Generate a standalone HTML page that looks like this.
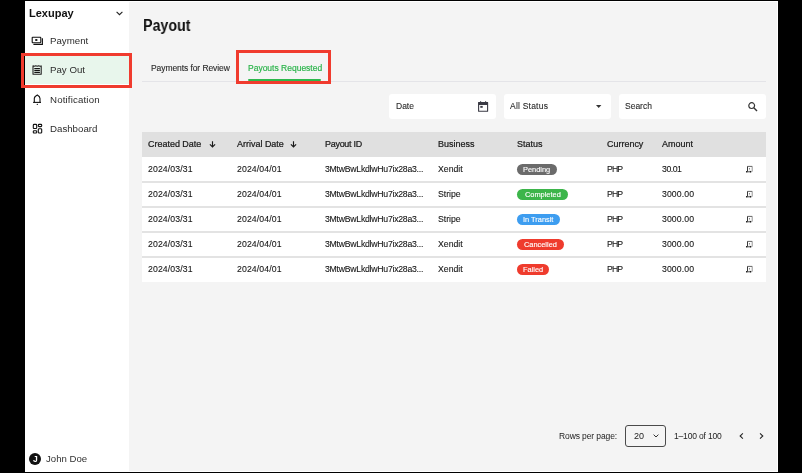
<!DOCTYPE html>
<html><head><meta charset="utf-8">
<style>
*{margin:0;padding:0;box-sizing:border-box}
html,body{width:802px;height:473px;background:#000;overflow:hidden;font-family:"Liberation Sans",sans-serif;color:#222}
.a{position:absolute;white-space:nowrap;line-height:1;will-change:transform}
.r{position:absolute}
svg{position:absolute;overflow:visible}
.red{position:absolute;border:3px solid #f03b2e}
.chip{position:absolute;height:11.5px;border-radius:6px;color:#fff;font-size:7.4px;line-height:11.5px;text-align:center;white-space:nowrap}
.chip span{will-change:transform;display:inline-block;-webkit-text-stroke:0.12px #fff}
.box{position:absolute;background:#fff;border-radius:3px;height:25px;top:94px}
</style></head><body>
<div class="r" style="left:25px;top:1px;width:753px;height:471px;background:#fff"></div>
<div class="r" style="left:129px;top:2px;width:648px;height:469px;background:#f4f4f4"></div>
<div class="a" style="left:29.00px;top:7.79px;font-size:11px;color:#111;font-weight:bold;">Lexupay</div>
<svg style="left:116px;top:11px" width="7" height="5" viewBox="0 0 7 5"><path d="M0.6 0.8 L3.5 3.7 L6.4 0.8" fill="none" stroke="#222" stroke-width="1.1"/></svg>
<div class="r" style="left:25px;top:56px;width:104px;height:28px;background:#e8f6ec"></div>
<svg style="left:31px;top:36px" width="12" height="9" viewBox="0 0 12 9"><rect x="1.2" y="1.3" width="8.6" height="5.4" rx="0.6" fill="none" stroke="#111" stroke-width="1.1"/><ellipse cx="5.3" cy="4" rx="1.3" ry="1.1" fill="#111"/><path d="M2.4 8.4 H11.4 V2.3" fill="none" stroke="#111" stroke-width="1.1"/></svg>
<div class="a" style="left:49.70px;top:35.99px;font-size:9.7px;color:#2c2c2c;font-weight:normal;">Payment</div>
<svg style="left:32px;top:65px" width="10" height="10" viewBox="0 0 10 10"><path d="M1 0.9 L2.4 1.3 L3.8 0.8 L5.2 1.3 L6.6 0.8 L8 1.3 L9.2 0.9 V9.3 H1 Z" fill="none" stroke="#222" stroke-width="1.1" stroke-linejoin="round"/><path d="M2.3 3.5 H7.9 M2.3 5.4 H7.9 M2.3 7.4 H7.9" stroke="#111" stroke-width="1.1"/></svg>
<div class="a" style="left:50.00px;top:65.29px;font-size:9.7px;color:#2c2c2c;font-weight:normal;">Pay Out</div>
<svg style="left:33px;top:94px" width="9" height="11" viewBox="0 0 9 11"><path d="M1.3 8.4 V4.6 Q1.3 2.4 4.3 0.9 Q7 2.4 7 4.6 V8.4" fill="none" stroke="#111" stroke-width="1.1" stroke-linejoin="round"/><path d="M0.1 8.4 H8" stroke="#111" stroke-width="1.1"/><circle cx="4.3" cy="10.4" r="0.6" fill="#111"/></svg>
<div class="a" style="left:49.90px;top:94.79px;font-size:9.7px;color:#2c2c2c;font-weight:normal;letter-spacing:0.15px;">Notification</div>
<svg style="left:32px;top:123px" width="11" height="11" viewBox="0 0 11 11"><g fill="none" stroke="#111" stroke-width="1.1"><rect x="1.3" y="1.4" width="3.4" height="4.1" rx="0.8"/><rect x="6.3" y="1.4" width="3.4" height="2.2" rx="0.8"/><rect x="1.3" y="7.8" width="3.4" height="2.2" rx="0.8"/><rect x="6.3" y="5.8" width="3.4" height="4.2" rx="0.8"/></g></svg>
<div class="a" style="left:49.90px;top:123.79px;font-size:9.7px;color:#2c2c2c;font-weight:normal;">Dashboard</div>
<div class="r" style="left:28.8px;top:452.8px;width:12.7px;height:12.7px;border-radius:50%;background:#111;color:#fff;font-size:8.5px;font-weight:bold;line-height:13px;text-align:center"><span style="display:inline-block;will-change:transform">J</span></div>
<div class="a" style="left:46.00px;top:454.27px;font-size:9.6px;color:#333;font-weight:normal;">John Doe</div>
<div class="red" style="left:21px;top:53px;width:111px;height:34.5px"></div>
<div class="a" style="left:142.80px;top:18.30px;font-size:16px;color:#111;font-weight:bold;transform:scaleX(0.89);transform-origin:0 0;">Payout</div>
<div class="a" style="left:150.50px;top:64.20px;font-size:8.5px;color:#2a2a2a;font-weight:normal;letter-spacing:-0.08px;-webkit-text-stroke:0.12px #2a2a2a;">Payments for Review</div>
<div class="a" style="left:247.60px;top:64.20px;font-size:8.5px;color:#2ab34a;font-weight:normal;-webkit-text-stroke:0.18px #2ab34a;">Payouts Requested</div>
<div class="r" style="left:142px;top:80.5px;width:624px;height:1px;background:#e4e4e8"></div>
<div class="r" style="left:248px;top:79px;width:72.5px;height:2px;border-radius:1px;background:#2db84d"></div>
<div class="red" style="left:236px;top:50px;width:95px;height:34px"></div>
<div class="box" style="left:389px;width:107px"></div>
<div class="a" style="left:395.80px;top:101.90px;font-size:8.5px;color:#2a2a2a;font-weight:normal;-webkit-text-stroke:0.1px #2a2a2a;">Date</div>
<svg style="left:478px;top:100px" width="11" height="12" viewBox="0 0 11 12"><path d="M0.6 2.6 H9.6 V11.2 H0.6 Z" fill="none" stroke="#3a3a44" stroke-width="1.1" stroke-linejoin="round"/><rect x="0.6" y="2" width="9" height="3" fill="#3a3a44"/><path d="M2.6 1.2 V2.5 M7.6 1.2 V2.5" stroke="#3a3a44" stroke-width="1.1"/><rect x="2.3" y="5.9" width="2.4" height="1.9" fill="#3a3a44"/></svg>
<div class="box" style="left:504px;width:107px"></div>
<div class="a" style="left:510.20px;top:102.30px;font-size:8.5px;color:#2a2a2a;font-weight:normal;letter-spacing:0.22px;-webkit-text-stroke:0.1px #2a2a2a;">All Status</div>
<svg style="left:595.8px;top:105.2px" width="5.4" height="3" viewBox="0 0 5.4 3"><path d="M0 0 H5.4 L2.7 3 Z" fill="#333"/></svg>
<div class="box" style="left:619px;width:147px"></div>
<div class="a" style="left:625.40px;top:102.00px;font-size:8.5px;color:#2a2a2a;font-weight:normal;-webkit-text-stroke:0.1px #2a2a2a;">Search</div>
<svg style="left:748px;top:102px" width="10" height="9" viewBox="0 0 10 9"><circle cx="3.7" cy="3.6" r="2.9" fill="none" stroke="#333" stroke-width="1.2"/><path d="M5.8 5.7 L9 8.9" stroke="#333" stroke-width="1.4"/></svg>
<div class="r" style="left:142px;top:132px;width:624px;height:25px;background:#e0e0e0"></div>
<div class="r" style="left:142px;top:157px;width:624px;height:125px;background:#fff"></div>
<div class="a" style="left:148.30px;top:140.40px;font-size:8.4px;color:#1a1a1a;font-weight:normal;-webkit-text-stroke:0.22px #1a1a1a;transform:scaleX(1.07);transform-origin:0 0;">Created Date</div>
<div class="a" style="left:236.80px;top:140.40px;font-size:8.4px;color:#1a1a1a;font-weight:normal;-webkit-text-stroke:0.22px #1a1a1a;transform:scaleX(1.07);transform-origin:0 0;">Arrival Date</div>
<div class="a" style="left:325.30px;top:140.40px;font-size:8.4px;color:#1a1a1a;font-weight:normal;letter-spacing:-0.25px;-webkit-text-stroke:0.22px #1a1a1a;transform:scaleX(1.07);transform-origin:0 0;">Payout ID</div>
<div class="a" style="left:438.30px;top:140.40px;font-size:8.4px;color:#1a1a1a;font-weight:normal;-webkit-text-stroke:0.22px #1a1a1a;transform:scaleX(1.07);transform-origin:0 0;">Business</div>
<div class="a" style="left:517.30px;top:140.40px;font-size:8.4px;color:#1a1a1a;font-weight:normal;-webkit-text-stroke:0.22px #1a1a1a;transform:scaleX(1.07);transform-origin:0 0;">Status</div>
<div class="a" style="left:606.80px;top:140.40px;font-size:8.4px;color:#1a1a1a;font-weight:normal;-webkit-text-stroke:0.22px #1a1a1a;transform:scaleX(1.07);transform-origin:0 0;">Currency</div>
<div class="a" style="left:661.80px;top:140.40px;font-size:8.4px;color:#1a1a1a;font-weight:normal;-webkit-text-stroke:0.22px #1a1a1a;transform:scaleX(1.07);transform-origin:0 0;">Amount</div>
<svg style="left:208.7px;top:141px" width="7" height="7" viewBox="0 0 7 7"><path d="M3.5 0.3 V6.1 M0.9 3.4 L3.5 6 L6.1 3.4" fill="none" stroke="#1a1a1a" stroke-width="1.15"/></svg>
<svg style="left:289.9px;top:141px" width="7" height="7" viewBox="0 0 7 7"><path d="M3.5 0.3 V6.1 M0.9 3.4 L3.5 6 L6.1 3.4" fill="none" stroke="#1a1a1a" stroke-width="1.15"/></svg>
<div class="a" style="left:148.30px;top:165.00px;font-size:8.7px;color:#151515;font-weight:normal;letter-spacing:0.12px;-webkit-text-stroke:0.1px #151515;">2024/03/31</div>
<div class="a" style="left:236.80px;top:165.00px;font-size:8.7px;color:#151515;font-weight:normal;letter-spacing:0.12px;-webkit-text-stroke:0.1px #151515;">2024/04/01</div>
<div class="a" style="left:325.30px;top:165.00px;font-size:8.7px;color:#151515;font-weight:normal;letter-spacing:-0.25px;-webkit-text-stroke:0.1px #151515;">3MtwBwLkdlwHu7ix28a3...</div>
<div class="a" style="left:438.30px;top:165.00px;font-size:8.7px;color:#151515;font-weight:normal;-webkit-text-stroke:0.1px #151515;">Xendit</div>
<div class="chip" style="left:517px;top:163.7px;width:40px;background:#6b6b6b"><span>Pending</span></div>
<div class="a" style="left:606.80px;top:165.00px;font-size:8.7px;color:#151515;font-weight:normal;letter-spacing:-0.9px;-webkit-text-stroke:0.1px #151515;">PHP</div>
<div class="a" style="left:661.80px;top:165.00px;font-size:8.7px;color:#151515;font-weight:normal;letter-spacing:-0.45px;-webkit-text-stroke:0.1px #151515;">30.01</div>
<svg style="left:745px;top:165px" width="9" height="9" viewBox="0 0 9 9"><path d="M7.2 1.4 V6.6" stroke="#888" stroke-width="0.9"/><path d="M2.5 1.4 H7.2" stroke="#555" stroke-width="0.9"/><path d="M2.5 1.4 V6.2" stroke="#222" stroke-width="0.9"/><path d="M1.4 6.8 H6.3" stroke="#444" stroke-width="1"/><circle cx="1.7" cy="6.7" r="0.75" fill="#111"/><circle cx="5.6" cy="6.8" r="0.7" fill="#111"/><circle cx="4.5" cy="3.8" r="0.6" fill="#444"/><path d="M3.6 5.3 H6.3" stroke="#ddd" stroke-width="0.6"/></svg>
<div class="r" style="left:142px;top:181.2px;width:624px;height:2px;background:#e3e3e3"></div>
<div class="a" style="left:148.30px;top:190.00px;font-size:8.7px;color:#151515;font-weight:normal;letter-spacing:0.12px;-webkit-text-stroke:0.1px #151515;">2024/03/31</div>
<div class="a" style="left:236.80px;top:190.00px;font-size:8.7px;color:#151515;font-weight:normal;letter-spacing:0.12px;-webkit-text-stroke:0.1px #151515;">2024/04/01</div>
<div class="a" style="left:325.30px;top:190.00px;font-size:8.7px;color:#151515;font-weight:normal;letter-spacing:-0.25px;-webkit-text-stroke:0.1px #151515;">3MtwBwLkdlwHu7ix28a3...</div>
<div class="a" style="left:438.30px;top:190.00px;font-size:8.7px;color:#151515;font-weight:normal;-webkit-text-stroke:0.1px #151515;">Stripe</div>
<div class="chip" style="left:517px;top:188.7px;width:51px;background:#3cb54a"><span>Completed</span></div>
<div class="a" style="left:606.80px;top:190.00px;font-size:8.7px;color:#151515;font-weight:normal;letter-spacing:-0.9px;-webkit-text-stroke:0.1px #151515;">PHP</div>
<div class="a" style="left:661.80px;top:190.00px;font-size:8.7px;color:#151515;font-weight:normal;letter-spacing:0.1px;-webkit-text-stroke:0.1px #151515;">3000.00</div>
<svg style="left:745px;top:190px" width="9" height="9" viewBox="0 0 9 9"><path d="M7.2 1.4 V6.6" stroke="#888" stroke-width="0.9"/><path d="M2.5 1.4 H7.2" stroke="#555" stroke-width="0.9"/><path d="M2.5 1.4 V6.2" stroke="#222" stroke-width="0.9"/><path d="M1.4 6.8 H6.3" stroke="#444" stroke-width="1"/><circle cx="1.7" cy="6.7" r="0.75" fill="#111"/><circle cx="5.6" cy="6.8" r="0.7" fill="#111"/><circle cx="4.5" cy="3.8" r="0.6" fill="#444"/><path d="M3.6 5.3 H6.3" stroke="#ddd" stroke-width="0.6"/></svg>
<div class="r" style="left:142px;top:206.2px;width:624px;height:2px;background:#e3e3e3"></div>
<div class="a" style="left:148.30px;top:215.00px;font-size:8.7px;color:#151515;font-weight:normal;letter-spacing:0.12px;-webkit-text-stroke:0.1px #151515;">2024/03/31</div>
<div class="a" style="left:236.80px;top:215.00px;font-size:8.7px;color:#151515;font-weight:normal;letter-spacing:0.12px;-webkit-text-stroke:0.1px #151515;">2024/04/01</div>
<div class="a" style="left:325.30px;top:215.00px;font-size:8.7px;color:#151515;font-weight:normal;letter-spacing:-0.25px;-webkit-text-stroke:0.1px #151515;">3MtwBwLkdlwHu7ix28a3...</div>
<div class="a" style="left:438.30px;top:215.00px;font-size:8.7px;color:#151515;font-weight:normal;-webkit-text-stroke:0.1px #151515;">Stripe</div>
<div class="chip" style="left:517px;top:213.7px;width:43.4px;background:#3d9df0"><span>In Transit</span></div>
<div class="a" style="left:606.80px;top:215.00px;font-size:8.7px;color:#151515;font-weight:normal;letter-spacing:-0.9px;-webkit-text-stroke:0.1px #151515;">PHP</div>
<div class="a" style="left:661.80px;top:215.00px;font-size:8.7px;color:#151515;font-weight:normal;letter-spacing:0.1px;-webkit-text-stroke:0.1px #151515;">3000.00</div>
<svg style="left:745px;top:215px" width="9" height="9" viewBox="0 0 9 9"><path d="M7.2 1.4 V6.6" stroke="#888" stroke-width="0.9"/><path d="M2.5 1.4 H7.2" stroke="#555" stroke-width="0.9"/><path d="M2.5 1.4 V6.2" stroke="#222" stroke-width="0.9"/><path d="M1.4 6.8 H6.3" stroke="#444" stroke-width="1"/><circle cx="1.7" cy="6.7" r="0.75" fill="#111"/><circle cx="5.6" cy="6.8" r="0.7" fill="#111"/><circle cx="4.5" cy="3.8" r="0.6" fill="#444"/><path d="M3.6 5.3 H6.3" stroke="#ddd" stroke-width="0.6"/></svg>
<div class="r" style="left:142px;top:231.2px;width:624px;height:2px;background:#e3e3e3"></div>
<div class="a" style="left:148.30px;top:240.00px;font-size:8.7px;color:#151515;font-weight:normal;letter-spacing:0.12px;-webkit-text-stroke:0.1px #151515;">2024/03/31</div>
<div class="a" style="left:236.80px;top:240.00px;font-size:8.7px;color:#151515;font-weight:normal;letter-spacing:0.12px;-webkit-text-stroke:0.1px #151515;">2024/04/01</div>
<div class="a" style="left:325.30px;top:240.00px;font-size:8.7px;color:#151515;font-weight:normal;letter-spacing:-0.25px;-webkit-text-stroke:0.1px #151515;">3MtwBwLkdlwHu7ix28a3...</div>
<div class="a" style="left:438.30px;top:240.00px;font-size:8.7px;color:#151515;font-weight:normal;-webkit-text-stroke:0.1px #151515;">Xendit</div>
<div class="chip" style="left:517px;top:238.7px;width:46.6px;background:#ef3b2d"><span>Cancelled</span></div>
<div class="a" style="left:606.80px;top:240.00px;font-size:8.7px;color:#151515;font-weight:normal;letter-spacing:-0.9px;-webkit-text-stroke:0.1px #151515;">PHP</div>
<div class="a" style="left:661.80px;top:240.00px;font-size:8.7px;color:#151515;font-weight:normal;letter-spacing:0.1px;-webkit-text-stroke:0.1px #151515;">3000.00</div>
<svg style="left:745px;top:240px" width="9" height="9" viewBox="0 0 9 9"><path d="M7.2 1.4 V6.6" stroke="#888" stroke-width="0.9"/><path d="M2.5 1.4 H7.2" stroke="#555" stroke-width="0.9"/><path d="M2.5 1.4 V6.2" stroke="#222" stroke-width="0.9"/><path d="M1.4 6.8 H6.3" stroke="#444" stroke-width="1"/><circle cx="1.7" cy="6.7" r="0.75" fill="#111"/><circle cx="5.6" cy="6.8" r="0.7" fill="#111"/><circle cx="4.5" cy="3.8" r="0.6" fill="#444"/><path d="M3.6 5.3 H6.3" stroke="#ddd" stroke-width="0.6"/></svg>
<div class="r" style="left:142px;top:256.2px;width:624px;height:2px;background:#e3e3e3"></div>
<div class="a" style="left:148.30px;top:265.00px;font-size:8.7px;color:#151515;font-weight:normal;letter-spacing:0.12px;-webkit-text-stroke:0.1px #151515;">2024/03/31</div>
<div class="a" style="left:236.80px;top:265.00px;font-size:8.7px;color:#151515;font-weight:normal;letter-spacing:0.12px;-webkit-text-stroke:0.1px #151515;">2024/04/01</div>
<div class="a" style="left:325.30px;top:265.00px;font-size:8.7px;color:#151515;font-weight:normal;letter-spacing:-0.25px;-webkit-text-stroke:0.1px #151515;">3MtwBwLkdlwHu7ix28a3...</div>
<div class="a" style="left:438.30px;top:265.00px;font-size:8.7px;color:#151515;font-weight:normal;-webkit-text-stroke:0.1px #151515;">Xendit</div>
<div class="chip" style="left:517px;top:263.7px;width:32.3px;background:#ef3b2d"><span>Failed</span></div>
<div class="a" style="left:606.80px;top:265.00px;font-size:8.7px;color:#151515;font-weight:normal;letter-spacing:-0.9px;-webkit-text-stroke:0.1px #151515;">PHP</div>
<div class="a" style="left:661.80px;top:265.00px;font-size:8.7px;color:#151515;font-weight:normal;letter-spacing:0.1px;-webkit-text-stroke:0.1px #151515;">3000.00</div>
<svg style="left:745px;top:265px" width="9" height="9" viewBox="0 0 9 9"><path d="M7.2 1.4 V6.6" stroke="#888" stroke-width="0.9"/><path d="M2.5 1.4 H7.2" stroke="#555" stroke-width="0.9"/><path d="M2.5 1.4 V6.2" stroke="#222" stroke-width="0.9"/><path d="M1.4 6.8 H6.3" stroke="#444" stroke-width="1"/><circle cx="1.7" cy="6.7" r="0.75" fill="#111"/><circle cx="5.6" cy="6.8" r="0.7" fill="#111"/><circle cx="4.5" cy="3.8" r="0.6" fill="#444"/><path d="M3.6 5.3 H6.3" stroke="#ddd" stroke-width="0.6"/></svg>
<div class="a" style="left:558.70px;top:432.00px;font-size:8.5px;color:#222;font-weight:normal;letter-spacing:-0.1px;">Rows per page:</div>
<div class="r" style="left:625px;top:425px;width:41px;height:21.5px;border:1px solid #4a4a4a;border-radius:3px"></div>
<div class="a" style="left:633.90px;top:431.68px;font-size:9px;color:#222;font-weight:normal;">20</div>
<svg style="left:652.6px;top:434.2px" width="6" height="4" viewBox="0 0 6 4"><path d="M0.6 0.6 L3 3 L5.4 0.6" fill="none" stroke="#333" stroke-width="1"/></svg>
<div class="a" style="left:673.90px;top:431.80px;font-size:8.5px;color:#222;font-weight:normal;letter-spacing:-0.17px;">1–100 of 100</div>
<svg style="left:738.8px;top:433.2px" width="5" height="6" viewBox="0 0 5 6"><path d="M3.9 0.4 L1.1 3 L3.9 5.6" fill="none" stroke="#222" stroke-width="1.05"/></svg>
<svg style="left:759.2px;top:433.2px" width="5" height="6" viewBox="0 0 5 6"><path d="M1 0.4 L3.8 3 L1 5.6" fill="none" stroke="#222" stroke-width="1.05"/></svg>
</body></html>
